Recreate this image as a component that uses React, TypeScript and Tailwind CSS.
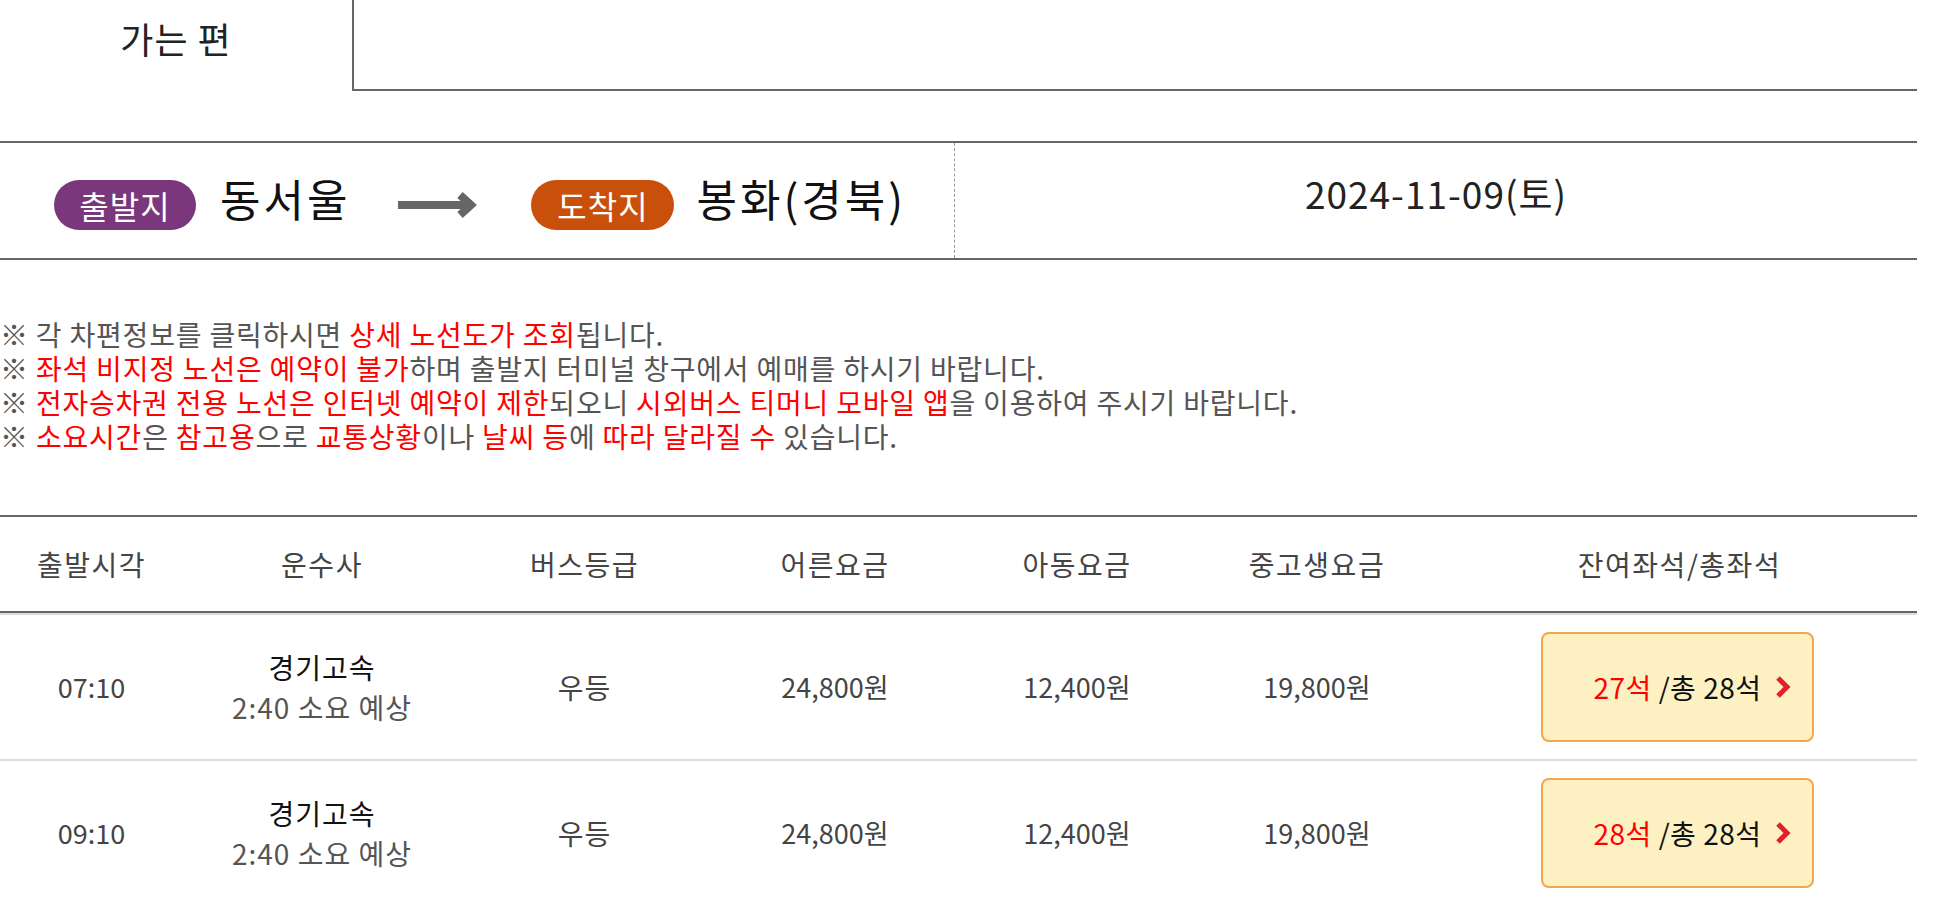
import React from 'react';

const cols = 'grid grid-cols-[183px_278px_247px_254px_230px_250px_475px]';

const rows = [
  { time: '07:10', left: '27' },
  { time: '09:10', left: '28' },
];

function RouteArrow() {
  return (
    <svg width="80" height="26" viewBox="0 0 80 26" className="mt-[8px]">
      <path d="M0 13 H71" stroke="#666" strokeWidth="8" fill="none" />
      <path d="M62 3 L73 13 L62 23" stroke="#666" strokeWidth="8" fill="none" />
    </svg>
  );
}

function Chevron() {
  return (
    <svg width="17" height="22" viewBox="0 0 17 22" className="absolute right-[21px] top-1/2 -translate-y-1/2">
      <path d="M4 2 L13 11 L4 20" stroke="#e41e2b" strokeWidth="5" fill="none" />
    </svg>
  );
}

export default function App() {
  return (
    <div className="w-[1917px] bg-white font-['Noto_Sans_CJK_KR','Noto_Sans',sans-serif] text-[#222]">
      {/* tabs */}
      <div className="flex h-[91px]">
        <div className="w-[352px] pt-[14px] text-center text-[36px] leading-[48px] tracking-[1px] text-[#222]">가는 편</div>
        <div className="flex-1 border-l-2 border-b-2 border-[#666]" />
      </div>

      {/* route */}
      <div className="mt-[50px] flex h-[119px] border-y-2 border-[#666]">
        <div className="flex w-[955px] items-center border-r border-dashed border-[#999] pl-[54px]">
          <span className="mt-[8px] flex h-[50px] w-[142px] items-center justify-center rounded-full bg-[#7b377b] text-[32px] tracking-[1px] text-white">
            출발지
          </span>
          <span className="mb-[6px] ml-[24px] text-[44px] tracking-[3px] text-[#111]">동서울</span>
          <span className="ml-[48px]">
            <RouteArrow />
          </span>
          <span className="ml-[53px] mt-[8px] flex h-[50px] w-[143px] items-center justify-center rounded-full bg-[#c9500a] text-[32px] tracking-[1px] text-white">
            도착지
          </span>
          <span className="mb-[6px] ml-[22px] text-[44px] tracking-[3px] text-[#111]">봉화(경북)</span>
        </div>
        <div className="flex flex-1 items-center justify-center pb-[14px] text-[37px] tracking-[1px] text-[#222]">2024-11-09(토)</div>
      </div>

      {/* notes */}
      <div className="mt-[57px] text-[28px] leading-[34px] tracking-[0.8px] text-[#555]">
        <p>
          ※ 각 차편정보를 클릭하시면 <span className="text-[#ff0000]">상세 노선도가 조회</span>됩니다.
        </p>
        <p>
          ※ <span className="text-[#ff0000]">좌석 비지정 노선은 예약이 불가</span>하며 출발지 터미널 창구에서 예매를 하시기 바랍니다.
        </p>
        <p>
          ※ <span className="text-[#ff0000]">전자승차권 전용 노선은 인터넷 예약이 제한</span>되오니{' '}
          <span className="text-[#ff0000]">시외버스 티머니 모바일 앱</span>을 이용하여 주시기 바랍니다.
        </p>
        <p>
          ※ <span className="text-[#ff0000]">소요시간</span>은 <span className="text-[#ff0000]">참고용</span>으로{' '}
          <span className="text-[#ff0000]">교통상황</span>이나 <span className="text-[#ff0000]">날씨 등</span>에{' '}
          <span className="text-[#ff0000]">따라 달라질 수</span> 있습니다.
        </p>
      </div>

      {/* table */}
      <div className="mt-[62px] border-t-2 border-[#666]">
        <div className={`${cols} h-[96px] items-center border-b-2 border-[#666] text-center text-[28px] tracking-[1.5px] text-[#444]`}>
          <div>출발시각</div>
          <div>운수사</div>
          <div>버스등급</div>
          <div>어른요금</div>
          <div>아동요금</div>
          <div>중고생요금</div>
          <div>잔여좌석/총좌석</div>
        </div>
        {rows.map((r) => (
          <div key={r.time} className={`${cols} h-[146px] items-center border-t-2 border-[#ddd] text-center text-[27px] text-[#444]`}>
            <div>{r.time}</div>
            <div className="flex flex-col items-center text-[28px] tracking-[1px]">
              <span className="leading-[40px] text-[#111]">경기고속</span>
              <span className="leading-[40px] text-[#555]">2:40 소요 예상</span>
            </div>
            <div className="text-[28px] tracking-[1px]">우등</div>
            <div>24,800원</div>
            <div>12,400원</div>
            <div>19,800원</div>
            <div className="flex justify-center pr-[4px]">
              <button className="relative flex h-[110px] w-[273px] items-center justify-center rounded-[8px] border-2 border-[#f4a64c] bg-[#fdf0c2] text-[28px] tracking-[0.5px] text-[#111]">
                <span>
                  <span className="text-[#ff0000]">{r.left}석</span> /총 28석
                </span>
                <Chevron />
              </button>
            </div>
          </div>
        ))}
      </div>
    </div>
  );
}
